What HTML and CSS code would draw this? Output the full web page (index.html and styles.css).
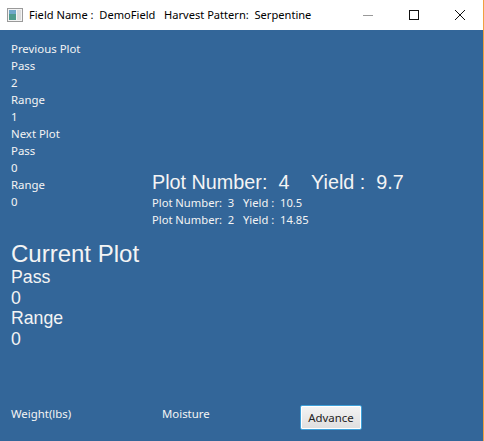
FILE: index.html
```html
<!DOCTYPE html>
<html>
<head>
<meta charset="utf-8">
<link rel="stylesheet" href="styles.css">
</head>
<body>
<div class="window">
  <div class="titlebar">
    <svg class="app-icon" width="16" height="14" viewBox="0 0 16 14">
      <rect x="0.5" y="0.5" width="15" height="13" fill="#f4f4f4" stroke="#9a9a9a"/>
      <rect x="2" y="2" width="7" height="10" fill="#4e9a8c"/>
      <rect x="2" y="2" width="7" height="4" fill="#6fa6c8"/>
      <rect x="10" y="2" width="4" height="10" fill="#dcdcdc"/>
    </svg>
    <span class="title">Field Name :  DemoField   Harvest Pattern:  Serpentine</span>
    <div class="controls">
      <svg class="ctl" width="46" height="30" viewBox="0 0 46 30"><line x1="18" y1="15.5" x2="28" y2="15.5" stroke="#999" stroke-width="1"/></svg>
      <svg class="ctl" width="46" height="30" viewBox="0 0 46 30"><rect x="18.5" y="10.5" width="9" height="9" fill="none" stroke="#111" stroke-width="1"/></svg>
      <svg class="ctl" width="46" height="30" viewBox="0 0 46 30"><path d="M18 10 L28 20 M28 10 L18 20" stroke="#111" stroke-width="1"/></svg>
    </div>
  </div>
  <div class="content">
    <div class="top-row">
      <div class="nav-col">
        <div>Previous Plot</div>
        <div>Pass</div>
        <div>2</div>
        <div>Range</div>
        <div>1</div>
        <div>Next Plot</div>
        <div>Pass</div>
        <div>0</div>
        <div>Range</div>
        <div>0</div>
      </div>
      <div class="plots">
        <div class="plot-main">Plot Number:  4    Yield :  9.7</div>
        <div class="plot-sub">Plot Number:  3   Yield :  10.5</div>
        <div class="plot-sub">Plot Number:  2   Yield :  14.85</div>
      </div>
    </div>
    <div class="current">
      <div class="current-title">Current Plot</div>
      <div class="current-line">Pass</div>
      <div class="current-line">0</div>
      <div class="current-line">Range</div>
      <div class="current-line">0</div>
    </div>
    <div class="footer">
      <div class="f-weight">Weight(lbs)</div>
      <div class="f-moisture">Moisture</div>
      <button class="advance">Advance</button>
    </div>
  </div>
</div>
</body>
</html>
```
FILE: styles.css
```css
html, body {
  margin: 0;
  padding: 0;
}
body {
  width: 484px;
  height: 441px;
  overflow: hidden;
}
.window {
  width: 483px;
  height: 441px;
  border-right: 1px solid #f0a040;
  display: flex;
  flex-direction: column;
  font-family: "Noto Sans", sans-serif;
}
.titlebar {
  height: 30px;
  background: #ffffff;
  display: flex;
  align-items: center;
  flex-shrink: 0;
}
.app-icon {
  margin-left: 7px;
  margin-right: 6px;
}
.title {
  white-space: pre;
  font-size: 11.1px;
  color: #000;
  font-family: "Noto Sans", sans-serif;
  margin-top: -1px;
}
.controls {
  margin-left: auto;
  display: flex;
}
.ctl {
  display: block;
}
.content {
  flex: 1;
  min-height: 0;
  background: #336699;
  color: #f4f4f4;
  display: flex;
  flex-direction: column;
  padding-left: 11px;
}
.top-row {
  display: flex;
  padding-top: 10px;
}
.nav-col {
  width: 141px;
  font-size: 11.4px;
  line-height: 17px;
}
.plots {
  margin-top: 130px;
}
.plot-main {
  white-space: pre;
  font-family: "Liberation Sans", Arial, sans-serif;
  font-size: 19.8px;
  line-height: 24px;
}
.plot-sub {
  white-space: pre;
  font-size: 11.2px;
  line-height: 17px;
}
.current {
  margin-top: 12px;
  font-family: "Liberation Sans", Arial, sans-serif;
}
.current-title {
  font-size: 24px;
  line-height: 27px;
}
.current-line {
  font-size: 17.7px;
  line-height: 20.7px;
}
.footer {
  margin-top: auto;
  margin-bottom: 11px;
  display: flex;
  align-items: flex-start;
  font-size: 11.4px;
}
.f-weight {
  width: 151px;
  padding-top: 1px;
}
.f-moisture {
  width: 138px;
  padding-top: 1px;
}
.advance {
  width: 62px;
  height: 25px;
  margin: 0;
  padding: 0;
  border: 1px solid #3fa0d8;
  border-radius: 2px;
  background: linear-gradient(#f4f4f4, #dedede);
  font-family: "Noto Sans", sans-serif;
  font-size: 11.4px;
  color: #222;
  box-shadow: inset 0 0 0 1px #ffffff;
}
```
